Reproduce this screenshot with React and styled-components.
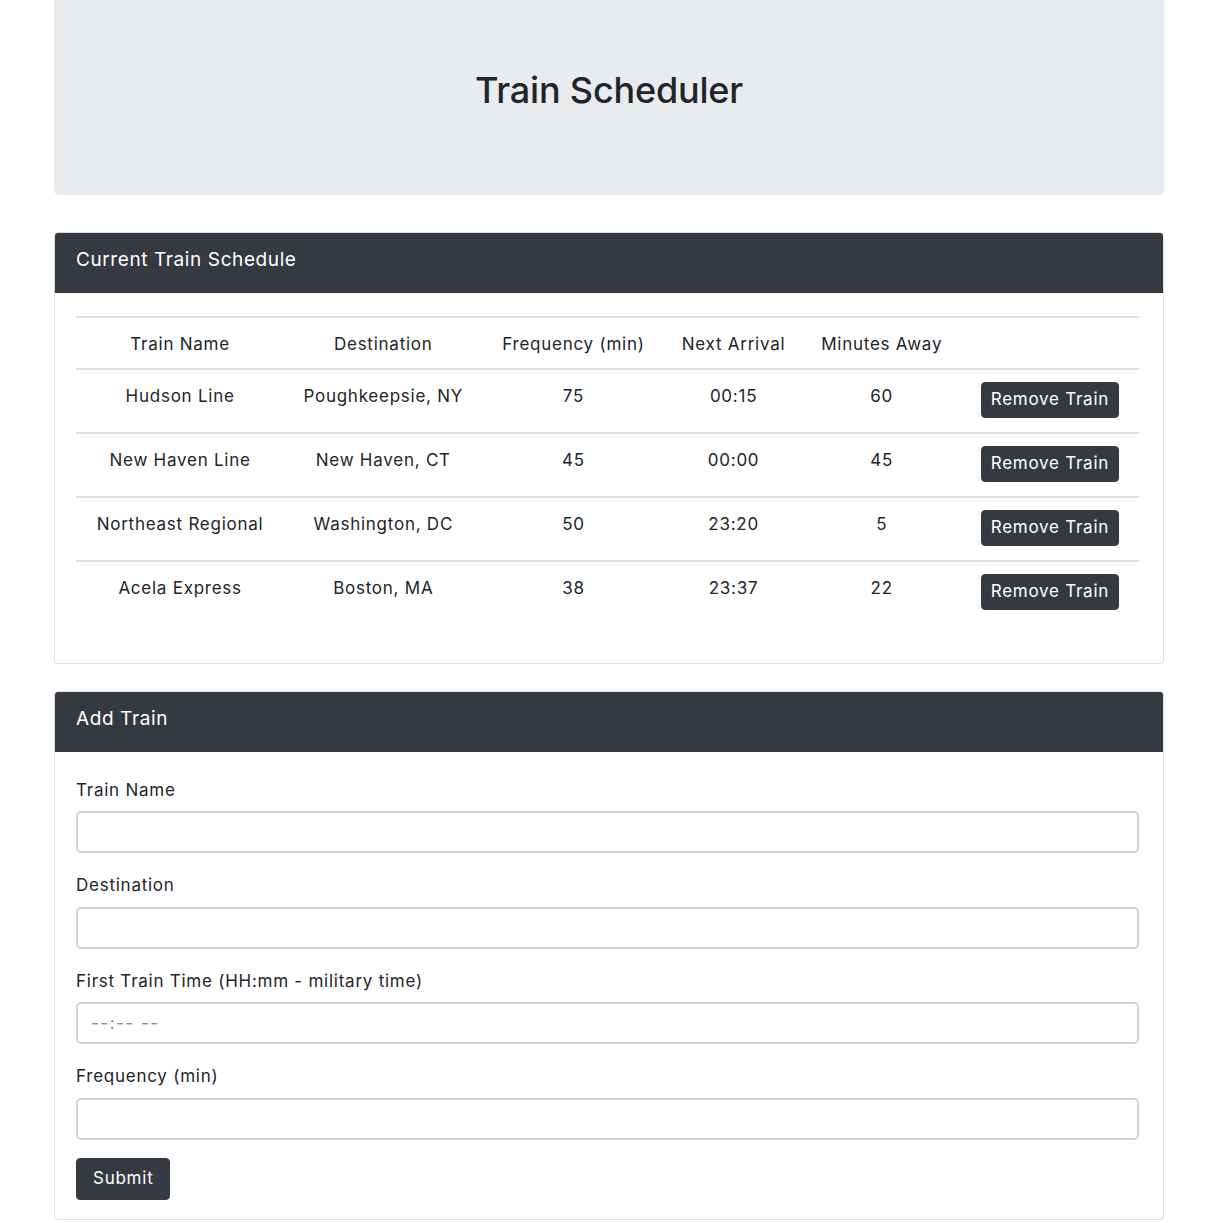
import styled, { createGlobalStyle } from "styled-components";

const GlobalStyle = createGlobalStyle`
  * { box-sizing: border-box; }
  body {
    margin: 0;
    background: #fff;
    color: #212529;
    font-family: Inter, "Noto Sans", sans-serif;
    font-size: 17px;
    line-height: 1.5;
  }
`;

const Page = styled.div`
  width: 1110px;
  margin: 0 0 0 54px;
  padding-bottom: 24px;
`;

const Jumbotron = styled.header`
  height: 195px;
  background: #e9ecef;
  border-radius: 0 0 5px 5px;
  display: flex;
  align-items: center;
  justify-content: center;
  margin-bottom: 37px;
`;

const Title = styled.h1`
  margin: 0 0 14px;
  font-size: 36px;
  font-weight: 500;
  line-height: 1.2;
  letter-spacing: -0.2px;
`;

const Card = styled.section`
  border: 1px solid #dfdfdf;
  border-radius: 4px;
  margin-bottom: ${(p) => p.$gap || 0}px;
  overflow: hidden;
`;

const CardHeader = styled.div`
  background: #343a40;
  color: #fff;
  height: 61px;
  margin: -1px -1px 0;
  padding: 0 22px 4px;
  display: flex;
  align-items: center;
  font-size: 19px;
  letter-spacing: 0.6px;
  border-radius: 4px 4px 0 0;
`;

const CardBody = styled.div`
  padding: ${(p) => p.$pad || "21px 24px 21px 21px"};
`;

const Table = styled.table`
  width: 100%;
  border-collapse: collapse;
  margin-bottom: 16px;
  text-align: center;
  letter-spacing: 0.75px;
`;

const Th = styled.th`
  font-weight: 400;
  padding: 14px 12px 10px;
  border-top: 2px solid #dee2e6;
  border-bottom: 2px solid #dee2e6;
  width: ${(p) => p.$w}px;
`;

const Td = styled.td`
  padding: ${(p) => (p.$action ? "12px 12px 14px" : "14px 12px 12px")};
  vertical-align: top;
  border-top: ${(p) => (p.$first ? "none" : "2px solid #dee2e6")};
`;

const DarkButton = styled.button`
  display: inline-block;
  vertical-align: top;
  background: #343a40;
  color: #fff;
  border: 1px solid #343a40;
  border-radius: 4px;
  font-family: inherit;
  font-size: 17px;
  line-height: 1.5;
  letter-spacing: 0.75px;
  height: ${(p) => (p.$small ? 36 : 42)}px;
  padding: ${(p) => (p.$small ? "0 9px" : "0 16px")};
  cursor: pointer;
`;

const Group = styled.div`
  margin-bottom: 20px;
  &:last-of-type { margin-bottom: 18px; }
`;

const Label = styled.label`
  display: block;
  margin-bottom: 8px;
  letter-spacing: 0.75px;
`;

const Input = styled.input`
  display: block;
  width: 100%;
  height: 42px;
  padding: 6px 13px;
  border: 2px solid #ced4da;
  border-radius: 5px;
  font-family: inherit;
  font-size: 17px;
  color: #495057;
  background: #fff;
  &::placeholder { color: #8a8f94; letter-spacing: 1.5px; }
`;

const trains = [
  { name: "Hudson Line", dest: "Poughkeepsie, NY", freq: 75, next: "00:15", away: 60 },
  { name: "New Haven Line", dest: "New Haven, CT", freq: 45, next: "00:00", away: 45 },
  { name: "Northeast Regional", dest: "Washington, DC", freq: 50, next: "23:20", away: 5 },
  { name: "Acela Express", dest: "Boston, MA", freq: 38, next: "23:37", away: 22 },
];

const columns = [
  { label: "Train Name", w: 208 },
  { label: "Destination", w: 198 },
  { label: "Frequency (min)", w: 182 },
  { label: "Next Arrival", w: 138 },
  { label: "Minutes Away", w: 158 },
  { label: "", w: 178 },
];

const fields = [
  { label: "Train Name", id: "name" },
  { label: "Destination", id: "dest" },
  { label: "First Train Time (HH:mm - military time)", id: "time", placeholder: "--:-- --" },
  { label: "Frequency (min)", id: "freq" },
];

export default function App() {
  return (
    <Page>
      <GlobalStyle />
      <Jumbotron>
        <Title>Train Scheduler</Title>
      </Jumbotron>

      <Card $gap={27}>
        <CardHeader>Current Train Schedule</CardHeader>
        <CardBody $pad="23px 24px 23px 21px">
          <Table>
            <thead>
              <tr>
                {columns.map((c, i) => (
                  <Th key={i} $w={c.w}>{c.label}</Th>
                ))}
              </tr>
            </thead>
            <tbody>
              {trains.map((t, i) => (
                <tr key={t.name}>
                  <Td $first={i === 0}>{t.name}</Td>
                  <Td $first={i === 0}>{t.dest}</Td>
                  <Td $first={i === 0}>{t.freq}</Td>
                  <Td $first={i === 0}>{t.next}</Td>
                  <Td $first={i === 0}>{t.away}</Td>
                  <Td $first={i === 0} $action>
                    <DarkButton $small>Remove Train</DarkButton>
                  </Td>
                </tr>
              ))}
            </tbody>
          </Table>
        </CardBody>
      </Card>

      <Card>
        <CardHeader>Add Train</CardHeader>
        <CardBody $pad="26px 24px 19px 21px">
          {fields.map((f) => (
            <Group key={f.id}>
              <Label htmlFor={f.id}>{f.label}</Label>
              <Input id={f.id} type="text" placeholder={f.placeholder} />
            </Group>
          ))}
          <DarkButton type="button">Submit</DarkButton>
        </CardBody>
      </Card>
    </Page>
  );
}
